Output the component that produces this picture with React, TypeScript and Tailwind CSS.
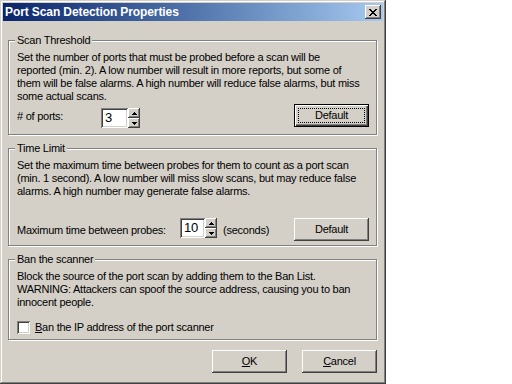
import type { ReactNode } from 'react';

// classic 3D edges (Win2000 look)
const RAISED =
  'shadow-[inset_-1px_-1px_#404040,inset_1px_1px_#ffffff,inset_-2px_-2px_#808080,inset_2px_2px_#d4d0c8]';
const SUNKEN =
  'shadow-[inset_1px_1px_#808080,inset_-1px_-1px_#ffffff,inset_2px_2px_#404040,inset_-2px_-2px_#d4d0c8]';

function Group({ title, className, children }: { title: string; className: string; children: ReactNode }) {
  return (
    <div
      className={`flex w-full flex-col border border-[#808080] pl-[8px] pr-[7px] shadow-[inset_1px_1px_#ffffff,1px_1px_#ffffff] ${className}`}
    >
      <span className="-mt-[7px] -ml-[2px] self-start bg-[#d4d0c8] px-[2px] leading-[13px]">{title}</span>
      {children}
    </div>
  );
}

function Arrow({ up }: { up?: boolean }) {
  return (
    <div className={`flex h-[10px] w-[12px] items-center justify-center bg-[#d4d0c8] ${RAISED}`}>
      <svg width="5" height="3" viewBox="0 0 5 3" shapeRendering="crispEdges">
        {up ? (
          <path d="M2 0h1v1h1v1h1v1H0V2h1V1h1z" fill="#000" />
        ) : (
          <path d="M0 0h5v1H4v1H3v1H2V2H1V1H0z" fill="#000" />
        )}
      </svg>
    </div>
  );
}

function Spin({ value, width, className }: { value: string; width: string; className: string }) {
  return (
    <div className={`flex ${className}`}>
      <div className={`h-[20px] bg-white pl-[4px] leading-[20px] text-[13px] ${width} ${SUNKEN}`}>{value}</div>
      <div className="flex flex-col">
        <Arrow up />
        <Arrow />
      </div>
    </div>
  );
}

function Button({ children, focused, className = '' }: { children: ReactNode; focused?: boolean; className?: string }) {
  if (focused) {
    return (
      <div
        className={`flex h-[23px] w-[75px] border border-black bg-[#d4d0c8] p-[3px] shadow-[inset_1px_1px_#ffffff,inset_-1px_-1px_#404040,inset_-2px_-2px_#808080] ${className}`}
      >
        <div className="flex flex-1 items-center justify-center border border-dotted border-black leading-[13px]">
          {children}
        </div>
      </div>
    );
  }
  return (
    <div className={`flex h-[23px] w-[75px] items-center justify-center bg-[#d4d0c8] leading-[13px] ${RAISED} ${className}`}>
      {children}
    </div>
  );
}

export default function App() {
  return (
    <div className="flex h-[384px] w-[512px] whitespace-nowrap bg-white font-['Liberation_Sans',Arial,sans-serif] text-[11px] tracking-[-0.25px] text-black">
      <div className="flex h-[384px] w-[386px] flex-col bg-[#d4d0c8] p-[3px] shadow-[inset_-1px_-1px_#404040,inset_1px_1px_#d4d0c8,inset_-2px_-2px_#808080,inset_2px_2px_#ffffff]">
        {/* title bar */}
        <div className="flex h-[18px] items-center justify-between bg-gradient-to-r from-[#0a246a] to-[#a6caf0] pl-[2px] pr-[2px]">
          <span className="text-[12px] font-bold leading-[18px] tracking-[-0.1px] text-white">Port Scan Detection Properties</span>
          <div className={`flex h-[14px] w-[16px] items-center justify-center bg-[#d4d0c8] pr-[1px] ${RAISED}`}>
            <svg width="8" height="7" viewBox="0 0 8 7" shapeRendering="crispEdges">
              <path
                d="M0 0h2v1H0zM6 0h2v1H6zM1 1h2v1H1zM5 1h2v1H5zM2 2h4v1H2zM3 3h2v1H3zM2 4h4v1H2zM1 5h2v1H1zM5 5h2v1H5zM0 6h2v1H0zM6 6h2v1H6z"
                fill="#000"
              />
            </svg>
          </div>
        </div>

        <div className="flex flex-1 flex-col pl-[5px] pr-[6px] pt-[19px]">
          <Group title="Scan Threshold" className="pb-[7px]">
            <p className="mt-[4px] leading-[13px]">
              Set the number of ports that must be probed before a scan will be
              <br />
              reported (min. 2). A low number will result in more reports, but some of
              <br />
              them will be false alarms. A high number will reduce false alarms, but miss
              <br />
              some actual scans.
            </p>
            <div className="mt-[1px] flex h-[23px] items-start">
              <span className="mt-[6px] w-[84px] leading-[13px]"># of ports:</span>
              <Spin value="3" width="w-[27px]" className="mt-[4px]" />
              <Button focused className="ml-auto">
                Default
              </Button>
            </div>
          </Group>

          <Group title="Time Limit" className="mt-[13px] pb-[4px]">
            <p className="mt-[4px] leading-[13px]">
              Set the maximum time between probes for them to count as a port scan
              <br />
              (min. 1 second). A low number will miss slow scans, but may reduce false
              <br />
              alarms. A high number may generate false alarms.
            </p>
            <div className="mt-[20px] flex h-[23px] items-start">
              <span className="mt-[6px] w-[163px] leading-[13px]">Maximum time between probes:</span>
              <Spin value="10" width="w-[25px]" className="mt-0" />
              <span className="ml-[6px] mt-[6px] leading-[13px]">(seconds)</span>
              <Button className="ml-auto">Default</Button>
            </div>
          </Group>

          <Group title="Ban the scanner" className="mt-[13px] pb-[5px]">
            <p className="mt-[4px] leading-[13px]">
              Block the source of the port scan by adding them to the Ban List.
              <br />
              WARNING: Attackers can spoof the source address, causing you to ban
              <br />
              innocent people.
            </p>
            <label className="mt-[12px] flex h-[13px] items-center">
              <span className={`h-[13px] w-[13px] bg-white ${SUNKEN}`} />
              <span className="ml-[5px] leading-[13px]">
                <span className="underline">B</span>an the IP address of the port scanner
              </span>
            </label>
          </Group>

          <div className="mt-[10px] flex justify-end gap-[15px]">
            <Button>
              <span className="underline">O</span>K
            </Button>
            <Button>
              <span className="underline">C</span>ancel
            </Button>
          </div>
        </div>
      </div>
    </div>
  );
}
